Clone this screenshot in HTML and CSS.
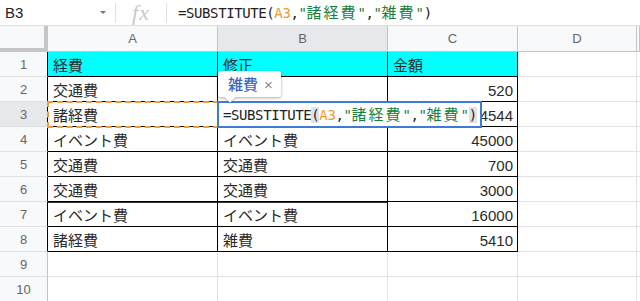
FILE: index.html
```html
<!DOCTYPE html>
<html lang="ja">
<head>
<meta charset="utf-8">
<title>Sheet</title>
<link rel="stylesheet" href="styles.css">
</head>
<body>
<div class="topbar">
  <div class="namebox"><span class="name">B3</span><span class="caret"></span></div>
  <div class="sep"></div>
  <div class="fx">fx</div>
  <div class="sep"></div>
  <div class="formula mono">=SUBSTITUTE(<span class="ref">A3</span>,<span class="str">"<span class="cj">諸経費</span>"</span>,<span class="str">"<span class="cj">雑費</span>"</span>)</div>
</div>
<div class="sheet">
  <div class="corner"></div>
  <div class="ch">A</div><div class="ch sel">B</div><div class="ch">C</div><div class="ch">D</div><div class="ch"></div>

  <div class="rh dk">1</div><div class="c d hd">経費</div><div class="c d hd">修正</div><div class="c d hd">金額</div><div class="c"></div><div class="c"></div>
  <div class="rh dk">2</div><div class="c d">交通費</div><div class="c d"></div><div class="c d n">520</div><div class="c"></div><div class="c"></div>
  <div class="rh dk sel">3</div><div class="c d">諸経費</div><div class="c d"></div><div class="c d n">4544</div><div class="c"></div><div class="c"></div>
  <div class="rh dk">4</div><div class="c d">イベント費</div><div class="c d">イベント費</div><div class="c d n">45000</div><div class="c"></div><div class="c"></div>
  <div class="rh dk">5</div><div class="c d">交通費</div><div class="c d">交通費</div><div class="c d n">700</div><div class="c"></div><div class="c"></div>
  <div class="rh dk">6</div><div class="c d">交通費</div><div class="c d">交通費</div><div class="c d n">3000</div><div class="c"></div><div class="c"></div>
  <div class="rh dk">7</div><div class="c d thick">イベント費</div><div class="c d thick">イベント費</div><div class="c d n">16000</div><div class="c"></div><div class="c"></div>
  <div class="rh dk">8</div><div class="c d">諸経費</div><div class="c d">雑費</div><div class="c d n">5410</div><div class="c"></div><div class="c"></div>
  <div class="rh">9</div><div class="c"></div><div class="c"></div><div class="c"></div><div class="c"></div><div class="c"></div>
  <div class="rh">10</div><div class="c"></div><div class="c"></div><div class="c"></div><div class="c"></div><div class="c"></div>

  <div class="refbox"></div>
  <div class="editor mono">=SUBSTITUTE<span class="paren">(</span><span class="ref">A3</span>,<span class="str">"<span class="cj">諸経費</span>"</span>,<span class="str">"<span class="cj">雑費</span>"</span><span class="paren">)</span></div>
  <div class="tip"><span class="tipval">雑費</span><span class="tipx">×</span><span class="arrow"></span></div>
</div>
</body>
</html>
```
FILE: styles.css
```css
html, body {
  margin: 0;
  padding: 0;
  background: #fff;
  width: 640px;
  height: 301px;
  overflow: hidden;
  font-family: "Liberation Sans", "Noto Sans CJK JP", sans-serif;
  color: #222;
}

.topbar {
  height: 26px;
  box-sizing: border-box;
  border-bottom: 1px solid #e0e0e0;
  display: flex;
  align-items: center;
}

.namebox {
  width: 115px;
  box-sizing: border-box;
  padding-left: 5px;
  padding-right: 9px;
  display: flex;
  align-items: center;
  justify-content: space-between;
  font-size: 15px;
}

.caret {
  width: 0;
  height: 0;
  border-left: 3.5px solid transparent;
  border-right: 3.5px solid transparent;
  border-top: 3.5px solid #777;
}

.sep {
  width: 1px;
  height: 20px;
  background: #e0e0e0;
}

.fx {
  width: 50px;
  text-align: center;
  font-family: "Liberation Serif", serif;
  font-style: italic;
  font-size: 22px;
  letter-spacing: 1px;
  color: #c8c8c8;
  line-height: 25px;
}

.mono {
  font-family: "DejaVu Sans Mono", "Noto Sans CJK JP", monospace;
  font-size: 14px;
  letter-spacing: -0.4px;
  color: #222;
}

.formula {
  padding-left: 11px;
  line-height: 25px;
}

.ref { color: #f09a30; }
.str { color: #17803a; }
.cj {
  font-family: "Noto Sans CJK JP", sans-serif;
  font-size: 15px;
  letter-spacing: 2px;
}

.sheet {
  position: relative;
  display: grid;
  grid-template-columns: 48px 170px 170px 130px 119px 3px;
  grid-template-rows: 26px repeat(10, 25px);
}

.corner {
  background: #f8f9fa;
  box-shadow: inset -4px -4px 0 #c6c6c6;
}

.ch {
  background: #f8f9fa;
  border-right: 1px solid #c4c4c4;
  border-bottom: 1px solid #c4c4c4;
  box-sizing: border-box;
  text-align: center;
  font-size: 13px;
  line-height: 25px;
  color: #666;
}
.ch.sel { background: #e6e8eb; }

.rh {
  background: #f8f9fa;
  border-right: 1px solid #c4c4c4;
  border-bottom: 1px solid #e0e0e0;
  box-sizing: border-box;
  text-align: center;
  font-size: 13px;
  padding-top: 2px;
  line-height: 22px;
  color: #666;
}
.rh.dk { border-right-color: #000; }
.rh.sel { background: #e6e8eb; }

.c {
  box-sizing: border-box;
  border-right: 1px solid #e2e2e3;
  border-bottom: 1px solid #e2e2e3;
  padding: 3px 4px 0 5px;
  font-size: 15px;
  line-height: 21px;
  white-space: nowrap;
  overflow: hidden;
  color: #2a2a2a;
}
.c.d {
  border-right-color: #000;
  border-bottom-color: #000;
}
.c.hd { background: #00ffff; }
.c.n { text-align: right; }
.c.thick { box-shadow: inset 0 1px 0 #333; }

.refbox {
  position: absolute;
  left: 47px;
  top: 75px;
  width: 172px;
  height: 27px;
  box-sizing: border-box;
  border: 2px dashed #f29b38;
}

.editor {
  position: absolute;
  left: 217px;
  top: 75px;
  width: 265px;
  height: 27px;
  box-sizing: border-box;
  border: 2px solid #3f7ad6;
  background: #fff;
  padding-left: 4px;
  line-height: 22px;
  white-space: nowrap;
}

.paren { background: #e2e2e2; }

.tip {
  position: absolute;
  left: 218px;
  top: 45px;
  width: 63px;
  height: 26px;
  box-sizing: border-box;
  background: #fff;
  border-radius: 2px;
  box-shadow: 0 1px 3px rgba(0, 0, 0, 0.35);
  display: flex;
  align-items: center;
  padding-left: 10px;
  gap: 6px;
}
.tipval {
  color: #3a66c0;
  font-size: 15px;
  font-family: "Noto Sans CJK JP", sans-serif;
  font-weight: 500;
  line-height: 20px;
  position: relative;
  z-index: 2;
}
.tipx {
  color: #8a8a8a;
  font-size: 15px;
  position: relative;
  z-index: 2;
}
.arrow {
  position: absolute;
  left: 8px;
  bottom: -4px;
  width: 8px;
  height: 8px;
  background: #fff;
  transform: rotate(45deg);
  box-shadow: 1px 1px 1px rgba(0, 0, 0, 0.2);
}
```
